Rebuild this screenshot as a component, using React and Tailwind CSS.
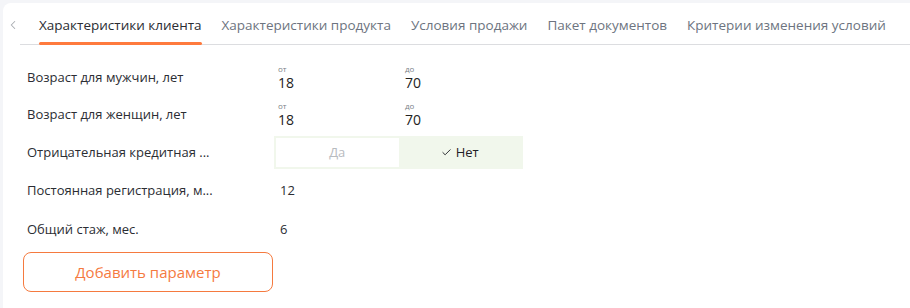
import { ChevronLeft, Check } from "lucide-react";

const tabs = [
    "Характеристики клиента",
    "Характеристики продукта",
    "Условия продажи",
    "Пакет документов",
    "Критерии изменения условий",
]

const RangeValue = ({from, to}) => (
    <div className="flex pl-[4px]">
        <div className="w-[127px] flex flex-col">
            <span className="text-[8px] leading-[10px] text-[#7a7f87]">от</span>
            <span className="text-[14px] leading-[18px] text-[#222]">{from}</span>
        </div>
        <div className="flex flex-col">
            <span className="text-[8px] leading-[10px] text-[#7a7f87]">до</span>
            <span className="text-[14px] leading-[18px] text-[#222]">{to}</span>
        </div>
    </div>
)

const Label = ({children}) => (
    <div className="w-[247px] shrink-0 whitespace-nowrap">{children}</div>
)

const App = () => {
    return (
        <div className="w-[910px] h-[308px] bg-[#f4f5f8] pl-[3px] pt-[3px] overflow-hidden" style={{fontFamily: '"Open Sans", "Noto Sans", sans-serif'}}>
            <div className="bg-white rounded-tl-lg h-full">
                {/* tabs */}
                <div className="flex items-end h-[42px] pl-[3px]">
                    <div className="w-[14px] h-[40px] flex items-center justify-center text-[#a9acb1]">
                        <ChevronLeft size={18} strokeWidth={1.8} />
                    </div>
                    <div className="flex-1 flex gap-[20px] pl-[19px] border-b border-[#dcdde0] h-[42px] items-stretch">
                        {tabs.map((t, i) => (
                            <div key={t} className={"relative flex items-center whitespace-nowrap text-[13.5px] pt-[4px] " + (i === 0 ? "text-[#2b2d33]" : "text-[#6d7480]")}>
                                {t}
                                {i === 0 ? <div className="absolute left-0 right-0 -bottom-[1px] h-[3px] rounded-full bg-[#ff7a3d]"></div> : <></>}
                            </div>
                        ))}
                    </div>
                </div>

                {/* params */}
                <div className="pl-[24px] pt-[14px] text-[13px] text-[#2b2d33]">
                    <div className="flex items-center h-[37px]">
                        <Label>Возраст для мужчин, лет</Label>
                        <RangeValue from="18" to="70" />
                    </div>
                    <div className="flex items-center h-[37px]">
                        <Label>Возраст для женщин, лет</Label>
                        <RangeValue from="18" to="70" />
                    </div>
                    <div className="flex items-center h-[39px]">
                        <Label>Отрицательная кредитная ...</Label>
                        <div className="flex w-[249px] h-[33px] bg-[#f1f7ec] p-[2px]">
                            <div className="flex-1 bg-white flex items-center justify-center text-[#b8bbbf] text-[13px]">Да</div>
                            <div className="flex-1 flex items-center justify-center gap-[4px] text-[#1f2126] text-[13px]">
                                <Check size={11} strokeWidth={2} />
                                Нет
                            </div>
                        </div>
                    </div>
                    <div className="flex items-center h-[38px]">
                        <Label>Постоянная регистрация, м...</Label>
                        <div className="pl-[6px]">12</div>
                    </div>
                    <div className="flex items-center h-[39px]">
                        <Label>Общий стаж, мес.</Label>
                        <div className="pl-[6px]">6</div>
                    </div>
                    <button type="button" className="mt-[3px] -ml-[4px] w-[250px] h-[40px] rounded-lg border border-[#f57a3f] text-[#f57a3f] text-[15px] bg-white">
                        Добавить параметр
                    </button>
                </div>
            </div>
        </div>
    );
}

export default App;
